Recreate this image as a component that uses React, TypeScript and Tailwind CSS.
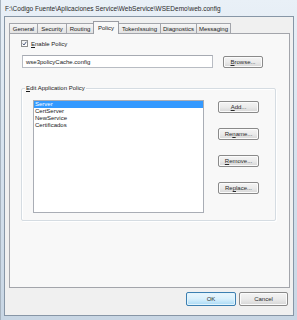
import React from "react";

const tabs: { label: string; w: string; selected?: boolean; first?: boolean }[] = [
  { label: "General", w: "w-[29px]", first: true },
  { label: "Security", w: "w-[29px]" },
  { label: "Routing", w: "w-[27px]" },
  { label: "Policy", w: "w-[26px]", selected: true },
  { label: "TokenIssuing", w: "w-[42px]" },
  { label: "Diagnostics", w: "w-[36px]" },
  { label: "Messaging", w: "w-[34px]" },
];

function Mn({ c }: { c: string }) {
  return <span className="underline decoration-[0.5px] underline-offset-[1px]">{c}</span>;
}

function Btn({ children, w = "w-[41px]", h = "h-[12px]", extra = "" }: { children: React.ReactNode; w?: string; h?: string; extra?: string }) {
  return (
    <div
      className={`${w} ${h} ${extra} flex items-center justify-center rounded-[2px] border border-[#8a8a8a] bg-gradient-to-b from-[#f4f4f4] via-[#ebebeb] to-[#d6d6d6] text-[6px] leading-none text-[#2a2a2a] shadow-[inset_0_0_0_1px_#fbfbfb]`}
    >
      <span>{children}</span>
    </div>
  );
}

export default function App() {
  const items = ["Server", "CertServer", "NewService", "Certificados"];
  return (
    <div className="w-[297px] h-[320px] overflow-hidden flex flex-col pl-[3px] pr-[3px] pb-[4px] border-l border-[#a7b3bf] bg-gradient-to-b from-[#e9f0f7] via-[#d6e2ee] to-[#c8d6e4] font-['Liberation_Sans',Arial,sans-serif]">
      <div className="h-[16px] pt-[3px] pl-[1px] flex items-center text-[6.5px] leading-none text-[#2a2a2a] whitespace-nowrap">
        F:\Codigo Fuente\Aplicaciones Service\WebService\WSEDemo\web.config
      </div>
      <div className="flex-1 flex flex-col border border-[#8796a6] bg-[#f0f0f0]">
        {/* tab strip */}
        <div className="mt-[4px] h-[12px] pl-[4px] flex items-end">
          {tabs.map((t) =>
            t.selected ? (
              <div
                key={t.label}
                className={`${t.w} h-[13px] -mb-[1px] -ml-[1px] relative z-10 flex items-center justify-center border-l border-t border-r border-[#9a9ca3] bg-[#f8f8f8] text-[6px] leading-none text-[#1a1a1a]`}
              >
                {t.label}
              </div>
            ) : (
              <div
                key={t.label}
                className={`${t.w} h-[10px] flex items-center justify-center border-t border-r ${t.first ? "border-l" : ""} border-[#a3a5ab] bg-gradient-to-b from-[#f6f6f6] to-[#e2e2e2] text-[6px] leading-none text-[#1a1a1a]`}
              >
                {t.label}
              </div>
            )
          )}
        </div>
        {/* tab panel */}
        <div className="ml-[4px] w-[281px] h-[255px] border border-[#a3a5ab] bg-[#f8f8f8] flex flex-col">
          <div className="mt-[6px] ml-[11px] flex items-center gap-[2px]">
            <div className="w-[7px] h-[7px] border border-[#8e8f8f] bg-gradient-to-br from-[#f0f0f0] to-[#ffffff] flex items-center justify-center">
              <svg width="5" height="5" viewBox="0 0 10 10">
                <path d="M1.5 5.2 L4 8 L8.8 1.5" fill="none" stroke="#3c4b6e" strokeWidth="1.8" />
              </svg>
            </div>
            <span className="text-[6px] leading-none text-[#1a1a1a] ml-[1px]">
              <Mn c="E" />nable Policy
            </span>
          </div>
          <div className="mt-[8px] ml-[12px] flex items-start">
            <div className="w-[191px] h-[13px] border border-[#b8bcc3] border-t-[#a6aab2] bg-white flex items-center pl-[3px] text-[6px] leading-none text-[#1a1a1a]">
              wse3policyCache.config
            </div>
            <div className="ml-[10px] mt-[1px]">
              <Btn w="w-[40px]" h="h-[12px]">
                <Mn c="B" />rowse...
              </Btn>
            </div>
          </div>
          {/* group box */}
          <div className="relative mt-[20px] ml-[11px] w-[255px] h-[133px] border border-[#d5dce2] rounded-[2px] shadow-[inset_1px_1px_0_#ffffff,1px_1px_0_#ffffff] flex items-start">
            <span className="absolute -top-[4px] left-[3px] px-[1px] bg-[#f8f8f8] text-[6px] leading-[7px] text-[#1a1a1a]">
              <Mn c="E" />dit Application Policy
            </span>
            <div className="mt-[11px] ml-[11px] w-[171px] h-[113px] border border-[#a9adb5] bg-white flex flex-col">
              {items.map((it, i) => (
                <div
                  key={it}
                  className={`h-[7px] pl-[1px] text-[6px] leading-[7px] ${i === 0 ? "bg-[#3399ff] text-white" : "text-[#1a1a1a]"}`}
                >
                  {it}
                </div>
              ))}
            </div>
            <div className="mt-[12px] ml-[14px] flex flex-col gap-[15px]">
              <Btn><Mn c="A" />dd...</Btn>
              <Btn>Re<Mn c="n" />ame...</Btn>
              <Btn><Mn c="R" />emove...</Btn>
              <Btn>Re<Mn c="p" />lace...</Btn>
            </div>
          </div>
        </div>
        {/* bottom buttons */}
        <div className="mt-[4px] pr-[5px] flex justify-end gap-[3px]">
          <div className="w-[50px] h-[14px] flex items-center justify-center rounded-[2px] border border-[#3c7fb1] bg-gradient-to-b from-[#eaf6fd] via-[#d9f0fc] to-[#a7d9f5] text-[6px] leading-none text-[#2a2a2a] shadow-[inset_0_0_0_1px_#e3f4fc]">
            OK
          </div>
          <Btn w="w-[49px]" h="h-[14px]">Cancel</Btn>
        </div>
      </div>
    </div>
  );
}
